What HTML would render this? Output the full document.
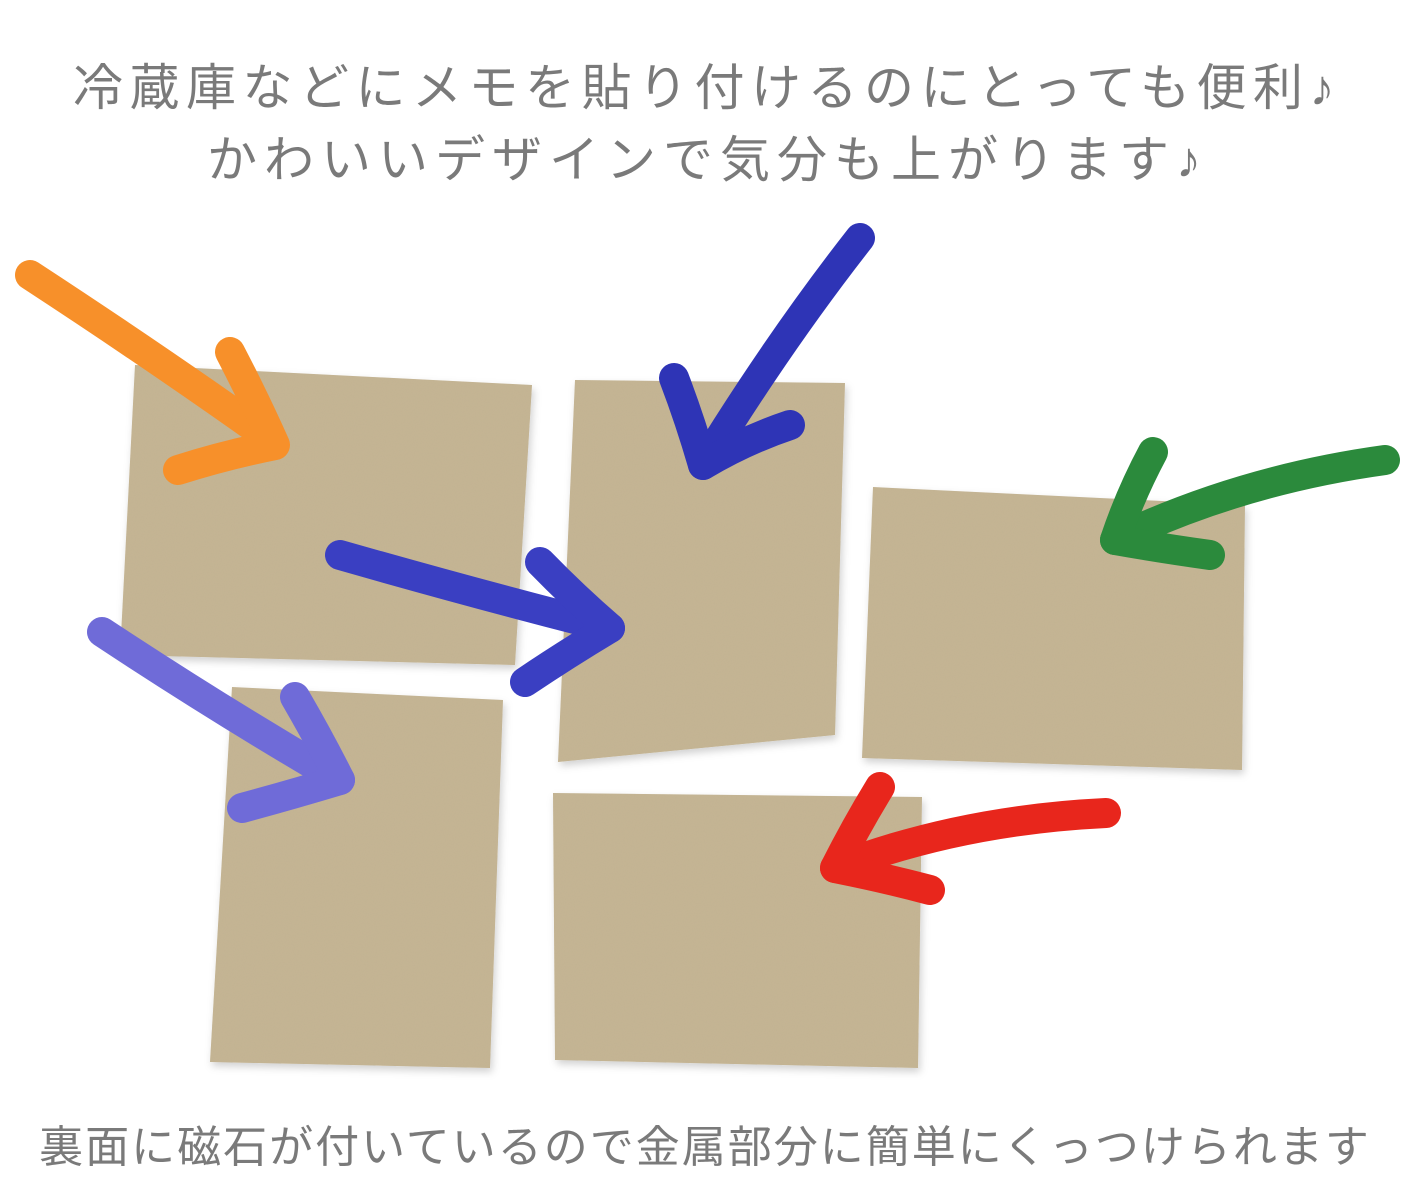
<!DOCTYPE html>
<html><head><meta charset="utf-8">
<style>
html,body{margin:0;padding:0;background:#fff;}
body{width:1408px;height:1200px;position:relative;overflow:hidden;font-family:"Liberation Sans","Noto Sans CJK JP",sans-serif;}
.t{position:absolute;left:0;width:1408px;text-align:center;color:#7a7a7a;white-space:nowrap;}
svg{position:absolute;left:0;top:0;}
</style></head><body>
<div class="t" style="top:48px;font-size:50px;letter-spacing:6.5px;text-indent:6px;">冷蔵庫などにメモを貼り付けるのにとっても便利♪</div>
<div class="t" style="top:120px;font-size:50px;letter-spacing:7px;text-indent:7px;">かわいいデザインで気分も上がります♪</div>
<svg width="1408" height="1200" viewBox="0 0 1408 1200">
<defs>
<filter id="sh" x="-10%" y="-10%" width="130%" height="130%"><feDropShadow dx="2" dy="4" stdDeviation="4" flood-color="#000" flood-opacity="0.18"/></filter>
<filter id="nz"><feTurbulence type="fractalNoise" baseFrequency="0.9" numOctaves="2" result="n"/><feColorMatrix type="matrix" values="0 0 0 0 0.45 0 0 0 0 0.38 0 0 0 0 0.25 0 0 0 0.18 0" in="n" result="c"/><feComposite in="c" in2="SourceGraphic" operator="in"/></filter>
</defs>
<g fill="#c5b594" filter="url(#sh)">
<polygon points="135,365 532,385 515,665 120,655"/>
<polygon points="575,380 845,383 835,735 558,762"/>
<polygon points="873,487 1245,505 1242,770 862,758"/>
<polygon points="232,687 503,700 490,1068 210,1062"/>
<polygon points="553,793 922,797 918,1068 555,1060"/>
</g>
<g fill="#fff" filter="url(#nz)">
<polygon points="135,365 532,385 515,665 120,655"/>
<polygon points="575,380 845,383 835,735 558,762"/>
<polygon points="873,487 1245,505 1242,770 862,758"/>
<polygon points="232,687 503,700 490,1068 210,1062"/>
<polygon points="553,793 922,797 918,1068 555,1060"/>
</g>
<g fill="none" stroke-linecap="round" stroke-linejoin="round" stroke-width="30">
<g stroke="#f7902a"><path d="M30,275 Q160,360 272,440"/><path d="M230,352 Q255,400 275,445 Q225,455 178,470"/></g>
<g stroke="#2e34b6"><path d="M860,238 Q780,340 703,465"/><path d="M674,378 Q690,420 703,465 Q745,440 790,425"/></g>
<g stroke="#2b8a3c"><path d="M1385,460 Q1240,480 1115,540"/><path d="M1153,452 Q1130,495 1115,540 Q1160,548 1210,555"/></g>
<g stroke="#3a3fc2"><path d="M340,555 Q480,595 610,628"/><path d="M540,562 Q575,598 610,628 Q565,655 525,682"/></g>
<g stroke="#6f6bd8"><path d="M102,632 Q220,710 340,780"/><path d="M295,697 Q320,740 340,780 Q290,795 242,808"/></g>
<g stroke="#e8261c"><path d="M1106,813 Q960,820 835,868"/><path d="M880,787 Q855,828 835,868 Q885,878 930,890"/></g>
</g>
</svg>
<div class="t" style="top:1111px;font-size:44px;letter-spacing:2px;text-indent:2px;">裏面に磁石が付いているので金属部分に簡単にくっつけられます</div>
</body></html>
